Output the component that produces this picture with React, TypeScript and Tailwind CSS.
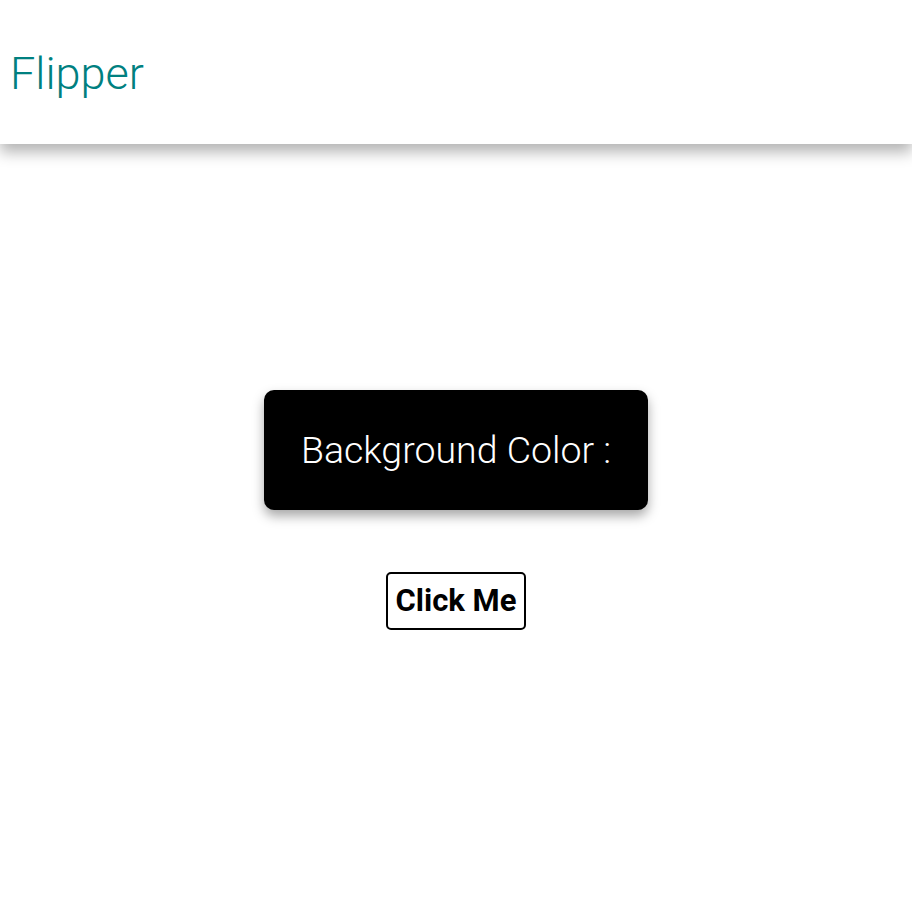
export default function App() {
  return (
    <div className="min-h-screen bg-white" style={{ fontFamily: 'Roboto, "Noto Sans", sans-serif' }}>
      {/* Header */}
      <header className="relative z-10 h-[144px] bg-white shadow-[0_8px_14px_rgba(0,0,0,0.3)] flex items-center px-[10px]">
        <h1 className="text-[45px] font-light text-[#008080] leading-none mt-[2px]">Flipper</h1>
      </header>

      {/* Content */}
      <main className="flex flex-col items-center pt-[246px]">
        <div className="w-[384px] h-[120px] rounded-[10px] bg-black shadow-[0_6px_12px_rgba(0,0,0,0.35)] flex items-center justify-center">
          <span className="text-white text-[37.5px] font-light">Background Color :</span>
        </div>
        <button className="mt-[62px] h-[58px] w-[140px] justify-center border-2 border-black rounded-[5px] bg-white text-black text-[31px] font-bold flex items-center">
          Click Me
        </button>
      </main>
    </div>
  );
}
